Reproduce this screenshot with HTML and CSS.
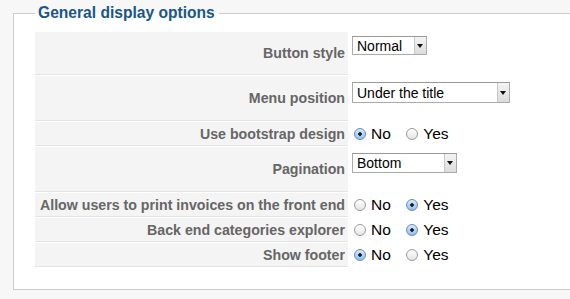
FILE: index.html
```html
<!DOCTYPE html>
<html lang="en">
<head>
    <meta charset="UTF-8">
    <meta name="viewport" content="width=device-width, initial-scale=1.0">
    <link rel="stylesheet" href="styles.css">
    <title>General display options</title>
</head>
<body>
    <fieldset class="options">
        <legend>General display options</legend>
        <table class="admintable">
            <tr class="tall first">
                <td class="key">Button style</td>
                <td><span class="select small"><select><option>Normal</option></select></span></td>
            </tr>
            <tr class="tall">
                <td class="key">Menu position</td>
                <td><span class="select wide"><select><option>Under the title</option></select></span></td>
            </tr>
            <tr>
                <td class="key">Use bootstrap design</td>
                <td>
                    <label class="radio"><input type="radio" name="bootstrap" checked> No</label>
                    <label class="radio"><input type="radio" name="bootstrap"> Yes</label>
                </td>
            </tr>
            <tr class="tall">
                <td class="key">Pagination</td>
                <td><span class="select medium"><select><option>Bottom</option></select></span></td>
            </tr>
            <tr>
                <td class="key">Allow users to print invoices on the front end</td>
                <td>
                    <label class="radio"><input type="radio" name="print"> No</label>
                    <label class="radio"><input type="radio" name="print" checked> Yes</label>
                </td>
            </tr>
            <tr>
                <td class="key">Back end categories explorer</td>
                <td>
                    <label class="radio"><input type="radio" name="explorer"> No</label>
                    <label class="radio"><input type="radio" name="explorer" checked> Yes</label>
                </td>
            </tr>
            <tr>
                <td class="key">Show footer</td>
                <td>
                    <label class="radio"><input type="radio" name="footer" checked> No</label>
                    <label class="radio"><input type="radio" name="footer"> Yes</label>
                </td>
            </tr>
        </table>
    </fieldset>
</body>
</html>
```

FILE: styles.css
```css
body {
    margin: 0;
    padding: 4px 0 0 13px;
    background-color: #f7f7f7;
    font-family: "Liberation Sans", Arial, sans-serif;
    overflow: hidden;
}

.options {
    width: 600px;
    margin: 0;
    padding: 0 0 21px 21px;
    background-color: white;
    border: 1px solid #cccccc;
}

.options legend {
    margin-left: 0;
    padding: 0 4px 0 3px;
    color: #19568a;
    font-size: 15.6px;
    font-weight: bold;
    line-height: 18px;
}

.admintable {
    margin-top: 9px;
    border-collapse: separate;
    border-spacing: 0 1px;
}

.admintable td {
    height: 23px;
    padding: 0 0 0 4px;
    vertical-align: middle;
}

.admintable td.key {
    width: 309px;
    padding: 0 3px 0 1px;
    background-color: #f4f4f4;
    border-bottom: 1px solid #e4e4e4;
    color: #666666;
    font-size: 14.2px;
    font-weight: bold;
    text-align: right;
    white-space: nowrap;
}

.admintable tr.tall td {
    height: 39px;
}

.admintable tr.tall td:last-child {
    vertical-align: top;
    padding-top: 6px;
}

.admintable tr.tall.first td:last-child {
    padding-top: 4px;
}

/* select boxes with the little arrow button */
.select {
    position: relative;
    display: inline-block;
    height: 17px;
    border: 1px solid #aaaaaa;
    border-top-color: #999999;
    background-color: white;
}

.select select {
    appearance: none;
    -webkit-appearance: none;
    width: 100%;
    height: 17px;
    margin: 0;
    padding: 0 0 0 4px;
    border: none;
    background: transparent;
    font-family: "Liberation Sans", Arial, sans-serif;
    font-size: 14px;
    color: black;
}

.select::after {
    content: "";
    position: absolute;
    right: 0;
    top: 0;
    width: 11px;
    height: 17px;
    background: linear-gradient(#f4f4f4, #dcdcdc);
    border-left: 1px solid #c8c8c8;
    pointer-events: none;
}

.select::before {
    content: "";
    position: absolute;
    right: 3px;
    top: 7px;
    z-index: 1;
    border-left: 3px solid transparent;
    border-right: 3px solid transparent;
    border-top: 4px solid #111111;
    pointer-events: none;
}

.select.small {
    width: 73px;
}

.select.wide {
    width: 156px;
    height: 19px;
}

.select.wide select,
.select.wide::after {
    height: 19px;
}

.select.wide::before {
    top: 8px;
}

.select.medium {
    width: 103px;
    height: 18px;
}

.select.medium select,
.select.medium::after {
    height: 18px;
}

.radio {
    display: inline-flex;
    align-items: center;
    margin-right: 9px;
    font-size: 15.5px;
    color: black;
}

.radio input {
    appearance: none;
    -webkit-appearance: none;
    width: 12px;
    height: 12px;
    margin: 0 5px 0 2px;
    border: 1px solid #9a9a9a;
    border-radius: 50%;
    background: linear-gradient(#ffffff, #e4e4e4);
}

.radio input:checked {
    border-color: #6d8bb5;
    background: radial-gradient(circle, #1c1c1c 0, #1c1c1c 1.5px, transparent 2px),
        linear-gradient(#d6e8fb, #8fbff0);
}
```
